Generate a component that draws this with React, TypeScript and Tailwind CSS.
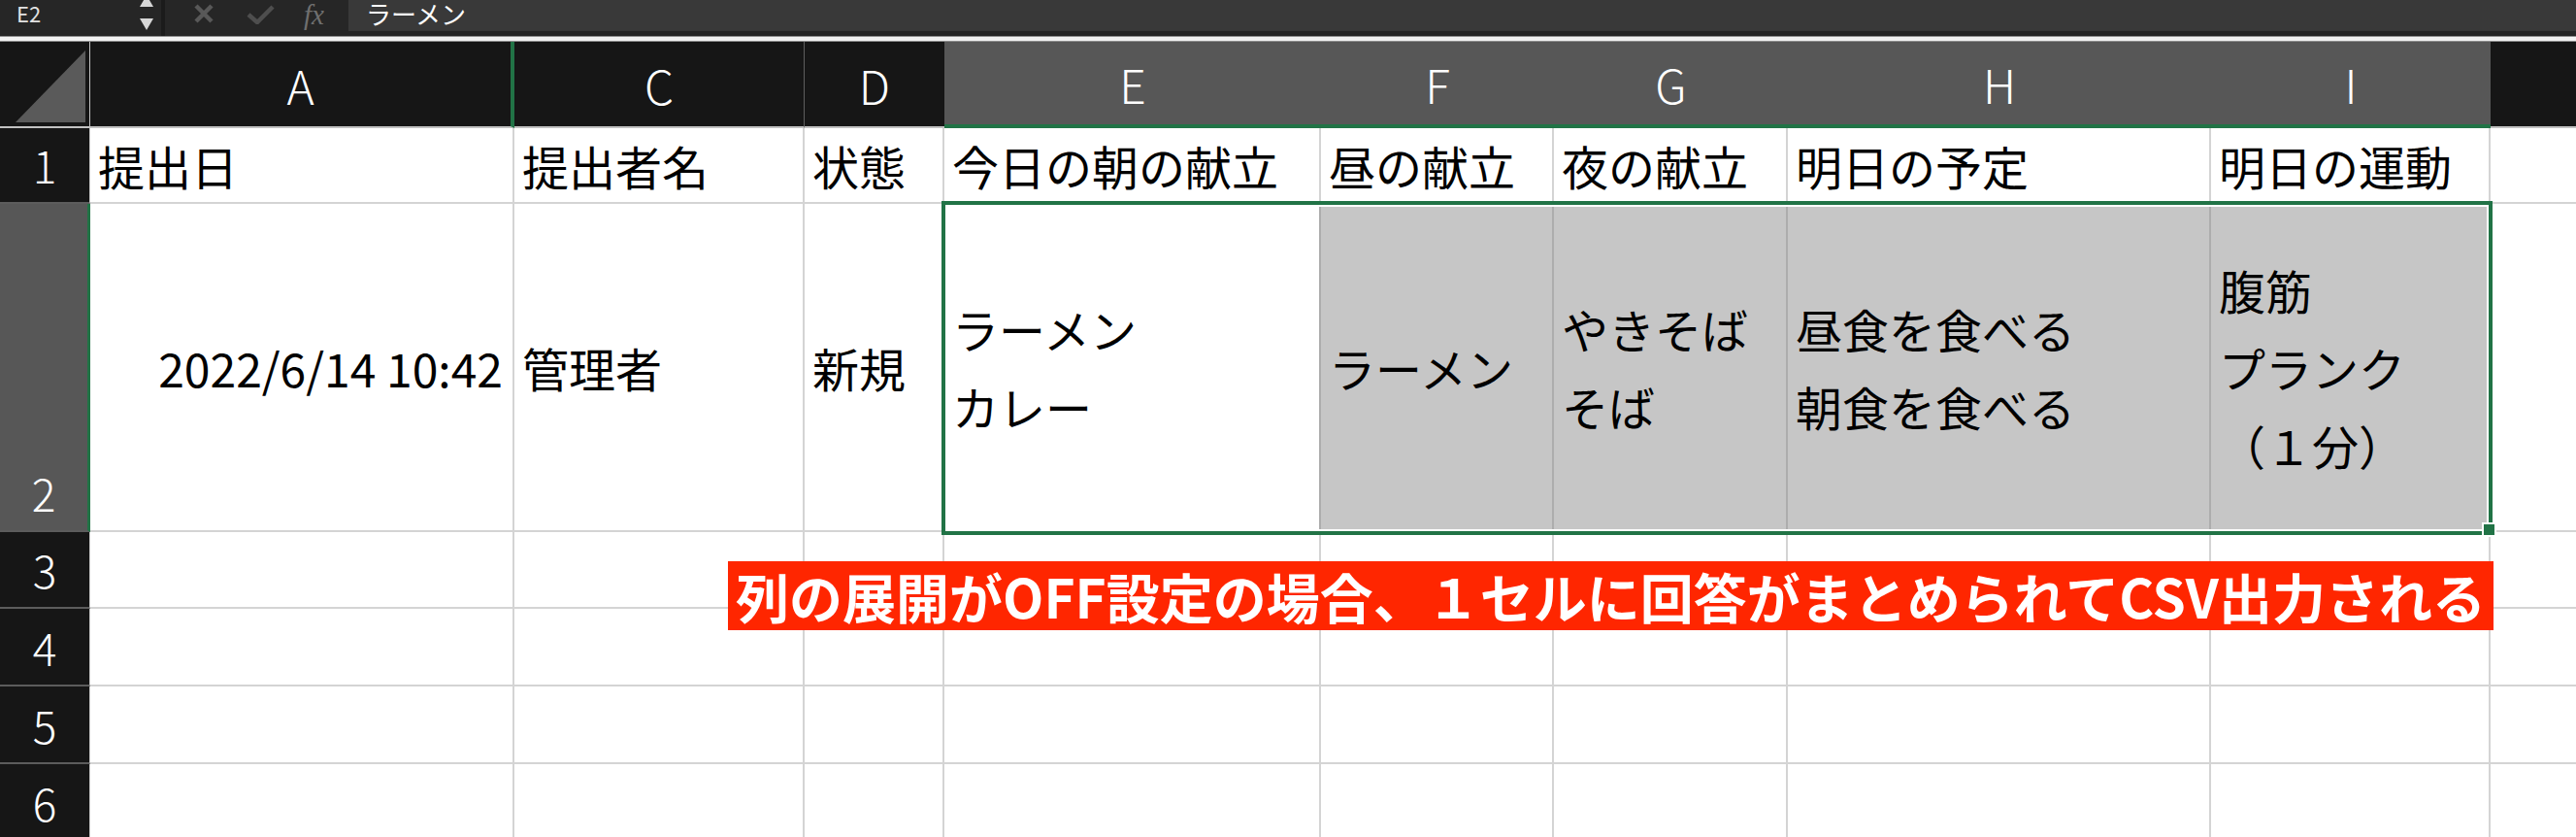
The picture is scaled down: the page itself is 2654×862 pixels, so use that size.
import React from 'react';

type Col = { id: string; w: string; sel: boolean };

const cols: Col[] = [
  { id: 'A', w: 'w-[437px]', sel: false },
  { id: 'C', w: 'w-[299px]', sel: false },
  { id: 'D', w: 'w-[144px]', sel: false },
  { id: 'E', w: 'w-[388px]', sel: true },
  { id: 'F', w: 'w-[240px]', sel: true },
  { id: 'G', w: 'w-[241px]', sel: true },
  { id: 'H', w: 'w-[436px]', sel: true },
  { id: 'I', w: 'w-[288px]', sel: true },
];

const row1 = ['提出日', '提出者名', '状態', '今日の朝の献立', '昼の献立', '夜の献立', '明日の予定', '明日の運動'];
const row2 = ['2022/6/14 10:42', '管理者', '新規', 'ラーメン\nカレー', 'ラーメン', 'やきそば\nそば', '昼食を食べる\n朝食を食べる', '腹筋\nプランク\n（１分）'];

function FormulaBar() {
  return (
    <div className="relative flex h-[37px] bg-[#262626]">
      <div className="relative h-full w-[166px]">
        <span className="absolute left-[17px] top-[2px] text-[22px] leading-[22px] text-[#e2e2e2]">E2</span>
        <svg className="absolute left-[144px] top-0" width="14" height="32" viewBox="0 0 14 32">
          <polygon points="0,7 14,7 7,-5" fill="#d6d6d6" />
          <polygon points="0,19 14,19 7,31" fill="#d6d6d6" />
        </svg>
      </div>
      <div className="h-full w-[4px] bg-[#1b1b1b]" />
      <div className="relative h-[32px] w-[189px]">
        <svg className="absolute left-[29px] top-[4px]" width="22" height="20" viewBox="0 0 22 20">
          <path d="M3 2 L19 18 M19 2 L3 18" stroke="#585858" strokeWidth="4.5" />
        </svg>
        <svg className="absolute left-[84px] top-[5px]" width="30" height="20" viewBox="0 0 30 20">
          <path d="M2 10 L11 18 L27 2" stroke="#4e4e4e" strokeWidth="4.5" fill="none" />
        </svg>
        <span className="absolute left-[143px] top-[1px] font-['Liberation_Serif',serif] text-[29px] italic leading-[29px] text-[#6f6f6f]">
          fx
        </span>
      </div>
      <div className="h-[32px] flex-1 bg-[#393939] pl-[18px] pt-[1px]">
        <span className="text-[26px] leading-[26px] text-white">ラーメン</span>
      </div>
    </div>
  );
}

function ColumnHeaders() {
  return (
    <div className="flex h-[89px]">
      <div className="relative w-[93px] shrink-0 border-b-2 border-r border-[#c2c2c2] bg-[#161616]">
        <svg className="absolute left-0 top-0" width="92" height="87" viewBox="0 0 92 87">
          <polygon points="16,83 88,83 88,9" fill="#5a5a5a" />
        </svg>
      </div>
      {cols.map((c) => (
        <div
          key={c.id}
          className={
            c.w +
            ' flex shrink-0 items-center justify-center text-[48px] font-light leading-none text-white ' +
            (c.sel
              ? 'border-b-4 border-[#217346] bg-[#575757]'
              : c.id === 'A'
                ? 'border-b-2 border-r-4 border-b-[#c2c2c2] border-r-[#217346] bg-[#161616]'
                : c.id === 'C'
                  ? 'border-b-2 border-r border-b-[#c2c2c2] border-r-[#5e5e5e] bg-[#161616]'
                  : 'border-b-2 border-[#c2c2c2] bg-[#161616]')
          }
        >
          {c.id}
        </div>
      ))}
      <div className="flex-1 border-b-2 border-[#c2c2c2] bg-[#161616]" />
    </div>
  );
}

function RowHead({ n, h, sel }: { n: number; h: string; sel?: boolean }) {
  return (
    <div
      className={
        h +
        ' flex w-[93px] shrink-0 items-end justify-center border-b-2 border-[#5c5c5c] ' +
        (sel ? 'border-r-[3px] border-r-[#217346] bg-[#575757]' : 'border-r border-r-[#c8c8c8] bg-[#161616]')
      }
    >
      <div className="flex h-[78px] items-center text-[46px] font-light leading-none text-white">{n}</div>
    </div>
  );
}

function EmptyRow({ n, h }: { n: number; h: string }) {
  return (
    <div className={h + ' flex'}>
      <RowHead n={n} h={h} />
      {cols.map((c) => (
        <div key={c.id} className={c.w + ' shrink-0 border-b-2 border-r-2 border-[#d4d4d4]'} />
      ))}
      <div className="flex-1 border-b-2 border-[#d4d4d4]" />
    </div>
  );
}

export default function App() {
  return (
    <div className="relative h-[862px] w-[2654px] overflow-hidden bg-white font-['Noto_Sans_CJK_JP',sans-serif] text-black">
      <FormulaBar />
      <div className="h-[6px] border-y border-[#8f8f8f] bg-[#f3f3f3]" />
      <ColumnHeaders />

      {/* row 1 */}
      <div className="flex h-[78px]">
        <RowHead n={1} h="h-[78px]" />
        {cols.map((c, i) => (
          <div
            key={c.id}
            className={c.w + ' flex shrink-0 items-center border-b-2 border-r-2 border-[#d4d4d4] pl-[8px] text-[48px] leading-none'}
          >
            {row1[i]}
          </div>
        ))}
        <div className="flex-1 border-b-2 border-[#d4d4d4]" />
      </div>

      {/* row 2 */}
      <div className="flex h-[338px]">
        <RowHead n={2} h="h-[338px]" sel />
        {cols.map((c, i) => {
          const gray = i >= 4;
          const right = i === 0;
          return (
            <div
              key={c.id}
              className={
                c.w +
                ' flex shrink-0 items-center border-b-2 border-r-2 border-b-[#d4d4d4] text-[48px] leading-[80px] whitespace-pre-line ' +
                (gray ? 'bg-[#c6c6c6] border-r-[#adadad] ' : i === 3 ? 'border-r-[#adadad] ' : 'border-r-[#d4d4d4] ') +
                (right ? 'justify-end pr-[10px]' : 'pl-[8px]')
              }
            >
              <div>{row2[i]}</div>
            </div>
          );
        })}
        <div className="flex-1 border-b-2 border-[#d4d4d4]" />
      </div>

      <EmptyRow n={3} h="h-[79px]" />
      <EmptyRow n={4} h="h-[80px]" />
      <EmptyRow n={5} h="h-[80px]" />
      <EmptyRow n={6} h="h-[80px]" />

      {/* selection E2:I2 */}
      <div className="absolute left-[970px] top-[207px] h-[344px] w-[1598px] border-4 border-[#217346] shadow-[inset_0_0_0_2px_#ffffff]" />
      <div className="absolute left-[2557px] top-[538px] h-[15px] w-[15px] border-2 border-white bg-[#217346]" />

      {/* note banner */}
      <div className="absolute left-[750px] top-[578px] flex h-[71px] w-[1819px] items-center justify-center whitespace-nowrap bg-[#ff2600] text-[55px] font-bold leading-none text-white">
        列の展開がOFF設定の場合、１セルに回答がまとめられてCSV出力される
      </div>
    </div>
  );
}
